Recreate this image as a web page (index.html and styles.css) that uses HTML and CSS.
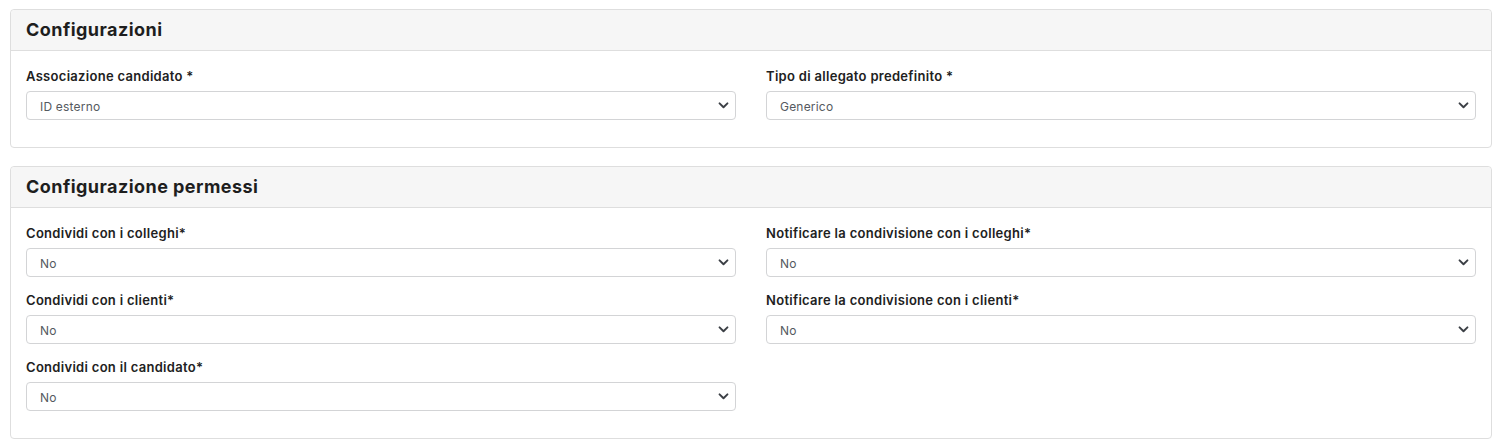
FILE: index.html
```html
<!DOCTYPE html>
<html lang="it">
<head>
  <meta charset="UTF-8" />
  <meta name="viewport" content="width=device-width, initial-scale=1.0"/>
  <title>Configurazioni</title>
  <link rel="stylesheet" href="styles.css">
</head>
<body>

  <div class="card">
    <div class="card-header">Configurazioni</div>
    <div class="card-body">
      <div class="field">
        <label>Associazione candidato *</label>
        <div class="select-wrap">
          <select><option>ID esterno</option></select>
          <svg class="chevron" viewBox="0 0 12 8"><path d="M1.5 1.5 L6 6 L10.5 1.5" /></svg>
        </div>
      </div>
      <div class="field">
        <label>Tipo di allegato predefinito *</label>
        <div class="select-wrap">
          <select><option>Generico</option></select>
          <svg class="chevron" viewBox="0 0 12 8"><path d="M1.5 1.5 L6 6 L10.5 1.5" /></svg>
        </div>
      </div>
    </div>
  </div>

  <div class="card">
    <div class="card-header">Configurazione permessi</div>
    <div class="card-body">
      <div class="field">
        <label>Condividi con i colleghi*</label>
        <div class="select-wrap">
          <select><option>No</option></select>
          <svg class="chevron" viewBox="0 0 12 8"><path d="M1.5 1.5 L6 6 L10.5 1.5" /></svg>
        </div>
      </div>
      <div class="field">
        <label>Notificare la condivisione con i colleghi*</label>
        <div class="select-wrap">
          <select><option>No</option></select>
          <svg class="chevron" viewBox="0 0 12 8"><path d="M1.5 1.5 L6 6 L10.5 1.5" /></svg>
        </div>
      </div>
      <div class="field">
        <label>Condividi con i clienti*</label>
        <div class="select-wrap">
          <select><option>No</option></select>
          <svg class="chevron" viewBox="0 0 12 8"><path d="M1.5 1.5 L6 6 L10.5 1.5" /></svg>
        </div>
      </div>
      <div class="field">
        <label>Notificare la condivisione con i clienti*</label>
        <div class="select-wrap">
          <select><option>No</option></select>
          <svg class="chevron" viewBox="0 0 12 8"><path d="M1.5 1.5 L6 6 L10.5 1.5" /></svg>
        </div>
      </div>
      <div class="field">
        <label>Condividi con il candidato*</label>
        <div class="select-wrap">
          <select><option>No</option></select>
          <svg class="chevron" viewBox="0 0 12 8"><path d="M1.5 1.5 L6 6 L10.5 1.5" /></svg>
        </div>
      </div>
    </div>
  </div>

</body>
</html>
```

FILE: styles.css
```css
* {
  box-sizing: border-box;
}

body {
  font-family: 'Inter', 'Open Sans', sans-serif;
  background: #ffffff;
  color: #212121;
  margin: 0;
  padding: 9px 15px 0 10px;
}

.card {
  border: 1px solid #dedede;
  border-radius: 4px;
  background: #ffffff;
  margin-bottom: 18px;
}

.card-header {
  background: #f6f6f6;
  border-bottom: 1px solid #dedede;
  border-radius: 4px 4px 0 0;
  padding: 9px 15px 9px;
  font-size: 18px;
  font-weight: 700;
  line-height: 22px;
  letter-spacing: 0.45px;
  color: #1e1e1e;
}

.card-body {
  display: grid;
  grid-template-columns: 1fr 1fr;
  column-gap: 30px;
  row-gap: 14px;
  padding: 16px 15px 27px;
}

label {
  display: block;
  font-size: 13px;
  font-weight: 600;
  line-height: 18px;
  letter-spacing: 0.3px;
  margin-bottom: 6px;
  color: #212121;
}

.select-wrap {
  position: relative;
}

select {
  display: block;
  width: 100%;
  height: 29px;
  padding: 2px 13px 0;
  border: 1px solid #d3d4d6;
  border-radius: 4px;
  background: #ffffff;
  font-family: inherit;
  font-size: 12px;
  letter-spacing: 0.2px;
  color: #555a60;
  appearance: none;
  -webkit-appearance: none;
}

.chevron {
  position: absolute;
  right: 7px;
  top: 11px;
  width: 11px;
  height: 7px;
  fill: none;
  stroke: #3b3f45;
  stroke-width: 2.2;
  stroke-linecap: round;
  stroke-linejoin: round;
  pointer-events: none;
}
```
